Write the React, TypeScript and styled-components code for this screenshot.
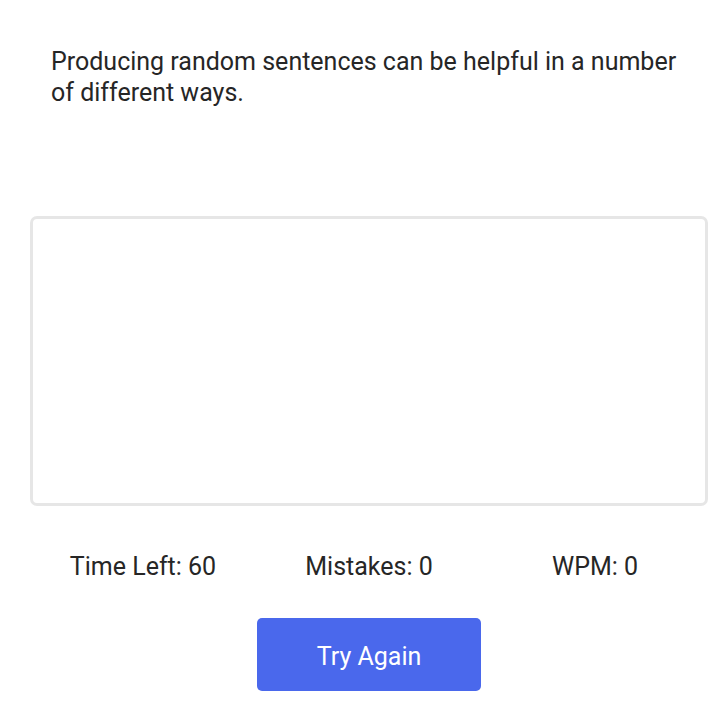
import React from "react";
import styled, { createGlobalStyle } from "styled-components";

const Global = createGlobalStyle`
  html, body { margin: 0; padding: 0; background: #ffffff; }
  body { font-family: Roboto, "Noto Sans", Arial, sans-serif; color: #262626; }
`;

const Page = styled.div`
  width: 724px;
  padding: 46px 16px 0 30px;
  box-sizing: border-box;
  display: flex;
  flex-direction: column;
`;

const Prompt = styled.p`
  margin: 0 0 0 21px;
  padding-right: 10px;
  font-size: 25px;
  line-height: 31px;
  color: #262626;
`;

const Input = styled.textarea`
  margin-top: 108px;
  width: 678px;
  height: 290px;
  box-sizing: border-box;
  border: 3px solid #e6e6e6;
  border-radius: 7px;
  resize: none;
  outline: none;
  font-family: inherit;
`;

const Stats = styled.div`
  margin-top: 46px;
  width: 678px;
  display: grid;
  grid-template-columns: repeat(3, 1fr);
`;

const Stat = styled.div`
  text-align: center;
  font-size: 25px;
  line-height: 29px;
  color: #262626;
`;

const Actions = styled.div`
  width: 678px;
  display: flex;
  justify-content: center;
  margin-top: 37px;
`;

const Button = styled.button`
  width: 224px;
  height: 73px;
  padding: 3px 0 0;
  border: none;
  border-radius: 5px;
  background: #4a68ec;
  color: #fff;
  font-family: inherit;
  font-size: 25px;
  cursor: pointer;
`;

export default function App() {
  return (
    <>
      <Global />
      <Page>
        <Prompt>Producing random sentences can be helpful in a number of different ways.</Prompt>
        <Input />
        <Stats>
          <Stat>Time Left: 60</Stat>
          <Stat>Mistakes: 0</Stat>
          <Stat>WPM: 0</Stat>
        </Stats>
        <Actions>
          <Button>Try Again</Button>
        </Actions>
      </Page>
    </>
  );
}
